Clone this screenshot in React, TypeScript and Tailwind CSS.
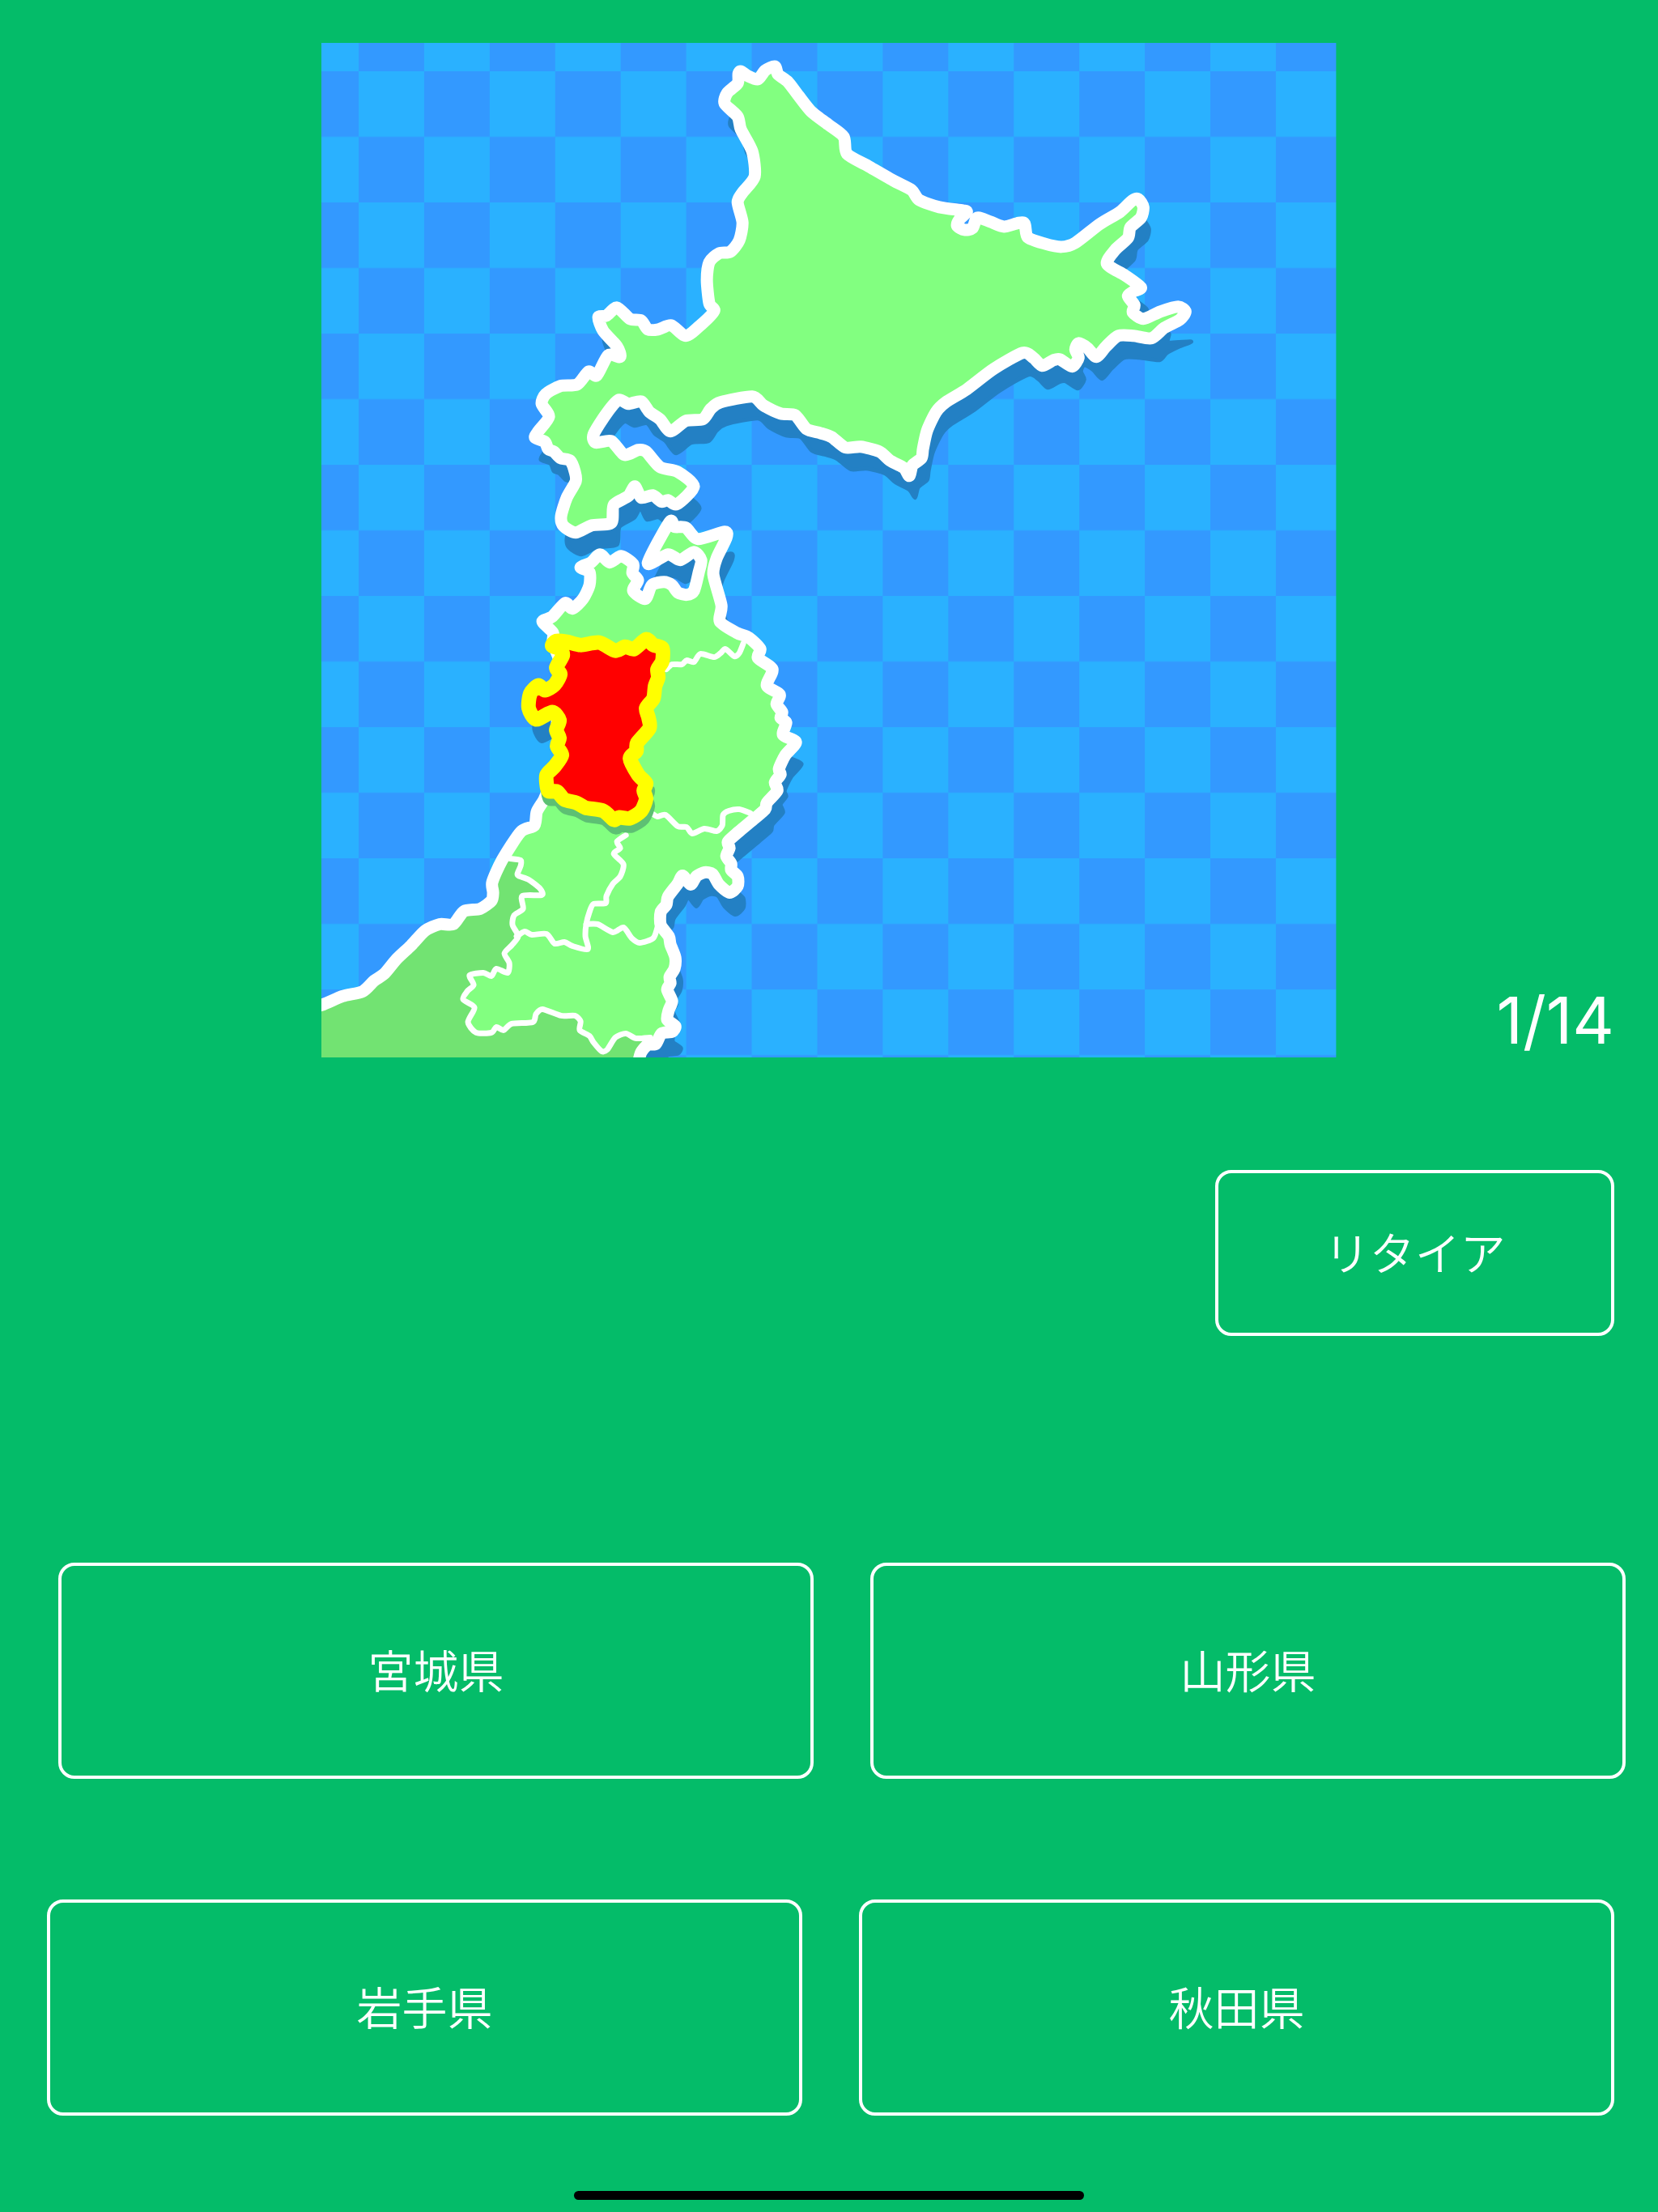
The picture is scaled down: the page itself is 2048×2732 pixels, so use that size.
import { useState } from "react";
import clsx from "clsx";

type Point = [number, number];

// Coastlines and prefecture borders, in map units.
const HOKKAIDO_NORTH =
  "915,88 924,94 936,98 945,87 957,82 961,92 973,101 986,118 1002,138 1023,154 1042,169 1046,190 1072,205 1105,224 1126,235 1135,247 1160,256 1189,260 1194,262 1185,271 1182,279 1191,284 1201,282 1207,269 1223,274 1240,280 1264,275 1269,293 1290,301 1311,305 1328,300 1358,277 1383,262 1398,248 1406,246 1412,256 1409,269 1396,281 1393,294 1377,309 1367,326 1389,340 1409,355 1400,360 1393,366 1401,377 1399,386 1412,394";

const NEMURO_CAPE = "1433,385 1455,379 1464,385 1457,395 1438,405 1422,418";
const NEMURO_CAPE_SHADOW = "1436,385 1436,396 1464,395 1450,401 1434,409 1425,418";

const HOKKAIDO_SOUTH =
  "1400,415 1381,415 1366,428 1354,441 1343,430 1332,424 1328,432 1332,442 1324,453 1309,444 1301,445 1287,452 1276,442 1263,436 1227,456 1194,481 1168,497 1156,509 1145,532 1140,554 1138,566 1127,575 1123,588 1116,578 1099,569 1086,558 1063,552 1044,553 1027,540 1013,535 996,530 982,513 964,511 943,501 929,490 890,497 878,505 868,518 847,520 828,533 815,518 802,509 792,496 776,499 764,494 749,511 733,537 736,547 755,545 771,562 788,556 798,558 815,577 837,583 857,601 836,623 825,618 817,620 806,612 792,615 784,601 776,613 758,624 755,646 731,649 711,658 696,650 693,638 700,615 711,595 710,583 704,569 692,566 684,558 677,555 673,546 661,541 664,534 678,515 669,499 674,487 692,477 713,475 727,459 737,464 751,439 766,441 762,428 745,409 739,392 749,390 762,380 778,394 792,396 800,407 813,407 829,402 847,415 866,401 882,384 876,375 873,346 876,324 888,313 902,311 913,297 917,275 911,250 917,238 932,218 929,187 915,160 911,144 895,128 898,115 911,103 912,91";

const EAST_COAST =
  "683,782 670,768 682,762 698,745 707,752 720,740 728,723 728,707 717,701 730,695 741,685 753,695 767,687 782,697 781,708 788,717 782,730 797,740 805,723 820,719 830,723 837,732 848,735 857,730 863,707 866,692 857,682 840,692 825,685 800,696 827,645 833,651 847,652 862,666 895,657 897,665 885,690 881,710 891,748 889,768 910,782 925,788 939,802 936,813 954,827 947,847 963,858 959,870 966,880 964,887 971,893 967,908 983,917 970,933 962,950 964,957 957,967 960,977 947,992 945,1000 930,1013 912,1028 899,1040 901,1048 897,1058 903,1067 903,1075 911,1083 911,1095 901,1103 888,1093 880,1080 870,1078 860,1083 853,1093 843,1082 837,1092 825,1108 823,1118 816,1127 816,1143 826,1157 828,1167 834,1183 833,1197 827,1207 828,1215 824,1223 830,1237 826,1248 824,1260 834,1268 830,1275 817,1277 810,1290 800,1291 792,1300 789,1310 785,1330";

const NIIGATA_COAST =
  "360,1254 397,1242 423,1231 448,1225 462,1212 475,1203 490,1185 508,1168 525,1150 543,1142 560,1142 573,1126 593,1123 607,1113 609,1103 608,1090 620,1063";

const YAMAGATA_COAST = "643,1028 660,1020 663,1003 672,988 676,976 676,958 694,933 688,900 690,850 692,820 683,795";

const NIIGATA_YAMAGATA =
  "630,1061 643,1063 643,1070 639,1080 642,1083 653,1087 667,1098 669,1106 645,1107 646,1123 635,1131 633,1143 640,1157";

const FUKUSHIMA_WEST =
  "632,1168 623,1178 629,1190 627,1202 613,1197 607,1206 597,1202 580,1205 585,1217 577,1225 572,1235 586,1245 578,1263 588,1276 607,1276 613,1269 622,1273 632,1265 658,1263 662,1253 670,1247 693,1255 710,1255 717,1262 716,1273 728,1280 733,1288 743,1299 750,1297 760,1282 773,1277 785,1283 803,1282";

const BORDERS = [
  "823,827 830,821 842,821 848,816 857,818 865,808 882,812 890,807 896,802 907,811 913,807 918,795",
  "805,1005 812,1009 822,1007 837,1021 848,1022 855,1030 870,1024 885,1027 892,1020 893,1007 900,1002 913,1000 927,1005",
  "773,1032 762,1040 766,1048 758,1055 770,1068 766,1083 757,1092 749,1107 748,1116 733,1117 728,1127 724,1142 723,1157 726,1173 707,1169 697,1164 685,1166 675,1154 657,1155 648,1151 638,1157",
  "724,1142 738,1142 757,1152 770,1146 780,1159 790,1165 807,1159 813,1142",
  `${NIIGATA_YAMAGATA} ${FUKUSHIMA_WEST}`,
];

const AKITA =
  "687,792 700,793 717,797 740,794 760,804 772,799 783,802 798,790 807,797 818,801 818,817 812,827 813,837 809,848 807,863 798,875 801,887 802,900 787,918 786,928 778,937 788,957 798,968 795,977 798,987 792,1002 778,1011 765,1010 758,1013 745,1002 723,998 712,992 697,988 688,978 677,977 675,958 685,947 694,933 688,922 691,912 687,902 691,890 682,880 662,889 653,875 655,857 665,847 673,853 685,846 692,833 687,825 695,810 692,802 682,798";

const HOKKAIDO = `${HOKKAIDO_NORTH} ${NEMURO_CAPE} ${HOKKAIDO_SOUTH}`;
const HOKKAIDO_SHADOW = `${HOKKAIDO_NORTH} ${NEMURO_CAPE_SHADOW} ${HOKKAIDO_SOUTH}`;
const HONSHU = `${EAST_COAST} 360,1330 ${NIIGATA_COAST} ${YAMAGATA_COAST}`;
const NIIGATA = `${NIIGATA_COAST} ${NIIGATA_YAMAGATA} ${FUKUSHIMA_WEST} 789,1310 785,1330 360,1330`;

function parse(points: string): Point[] {
  return points.split(" ").map((p) => p.split(",").map(Number) as Point);
}

// Rounds the corners of a polyline by running a gentle spline through its points.
function smooth(points: string, closed = false) {
  const pts = parse(points);
  const n = pts.length;
  const at = (i: number) => (closed ? pts[(i + n) % n] : pts[Math.max(0, Math.min(n - 1, i))]);
  let d = `M${pts[0][0]} ${pts[0][1]}`;
  for (let i = 0; i < (closed ? n : n - 1); i++) {
    const [a, b, c, e] = [at(i - 1), at(i), at(i + 1), at(i + 2)];
    const x1 = b[0] + (c[0] - a[0]) / 8;
    const y1 = b[1] + (c[1] - a[1]) / 8;
    const x2 = c[0] - (e[0] - b[0]) / 8;
    const y2 = c[1] - (e[1] - b[1]) / 8;
    d += `C${x1} ${y1} ${x2} ${y2} ${c[0]} ${c[1]}`;
  }
  return closed ? `${d}Z` : d;
}

function TohokuMap() {
  const hokkaido = smooth(HOKKAIDO, true);
  const honshu = smooth(HONSHU, true);
  const akita = smooth(AKITA, true);

  return (
    <svg
      viewBox="397 53 1253 1254"
      preserveAspectRatio="none"
      className="block aspect-square w-full"
      strokeLinejoin="round"
      strokeLinecap="round"
      role="img"
      aria-label="北海道・東北地方の地図"
    >
      <defs>
        <pattern id="sea" x="443" y="88" width="161.8" height="162.1" patternUnits="userSpaceOnUse">
          <rect width="161.8" height="162.1" fill="#2ab1ff" />
          <rect x="80.9" width="80.9" height="81" fill="#3399ff" />
          <rect y="81" width="80.9" height="81.1" fill="#3399ff" />
        </pattern>
        <clipPath id="akita-south">
          <rect x="640" y="972" width="200" height="80" />
        </clipPath>
      </defs>
      <rect x="397" y="53" width="1253" height="1254" fill="url(#sea)" />

      <g transform="translate(7 27)" fill="#2380c4" stroke="#2380c4" strokeWidth="5">
        <path d={smooth(HOKKAIDO_SHADOW, true)} />
        <path d={honshu} />
        <path d={akita} />
      </g>

      <path d={honshu} fill="#82ff80" />
      <path d={smooth(NIIGATA, true)} fill="#72e372" />
      <g fill="none" stroke="#fff" strokeWidth="7">
        {BORDERS.map((border) => (
          <path key={border} d={smooth(border)} />
        ))}
      </g>
      <path d={honshu} fill="none" stroke="#fff" strokeWidth="15" />
      <path d={hokkaido} fill="#82ff80" stroke="#fff" strokeWidth="15" />

      <g clipPath="url(#akita-south)">
        <path d={akita} transform="translate(2 9)" fill="#5dc073" stroke="#5dc073" strokeWidth="18" />
      </g>
      <path d={akita} fill="#f00" stroke="#ff0" strokeWidth="18" />
    </svg>
  );
}

function OutlineButton({
  label,
  className,
  onClick,
}: {
  label: string;
  className: string;
  onClick?: () => void;
}) {
  return (
    <button
      type="button"
      onClick={onClick}
      className={clsx(
        "flex items-center justify-center rounded-[20px] border-4 border-white pb-1.5 text-[56px] leading-none font-[350]",
        className,
      )}
    >
      {label}
    </button>
  );
}

const TOTAL = 14;

export default function App() {
  const [question, setQuestion] = useState(1);
  const next = () => setQuestion((q) => Math.min(TOTAL, q + 1));

  return (
    <main className="flex min-h-screen flex-col bg-[#04bc69] font-['Noto_Sans_CJK_JP',sans-serif] text-white">
      <section className="grid grid-cols-[1fr_61.2%_1fr] items-end pt-[53px]">
        <div className="col-start-2">
          <TohokuMap />
        </div>
        <p className="pr-[54px] text-right font-[Inter,sans-serif] text-[80px] leading-[92px]">
          {question}/{TOTAL}
        </p>
      </section>

      <div className="mt-[139px] flex justify-end pr-[54px]">
        <OutlineButton label="リタイア" className="h-[205px] w-[24.7%]" onClick={() => setQuestion(1)} />
      </div>

      <div className="mt-[280px] grid grid-cols-2 gap-[70px] pr-10 pl-[72px]">
        <OutlineButton label="宮城県" className="h-[267px]" onClick={next} />
        <OutlineButton label="山形県" className="h-[267px]" onClick={next} />
      </div>
      <div className="mt-[149px] grid grid-cols-2 gap-[70px] pr-[54px] pl-[58px]">
        <OutlineButton label="岩手県" className="h-[267px]" onClick={next} />
        <OutlineButton label="秋田県" className="h-[267px]" onClick={next} />
      </div>

      <div className="mx-auto mt-auto mb-[15px] h-[11px] w-[30.8%] rounded-full bg-black" />
    </main>
  );
}
